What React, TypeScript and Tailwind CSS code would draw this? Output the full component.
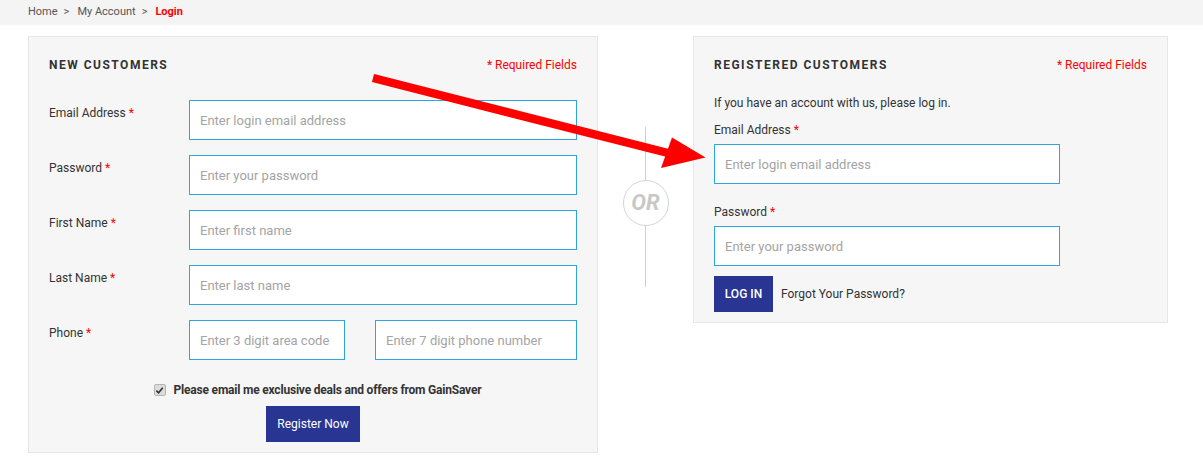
import React from "react";

const font = { fontFamily: "Roboto, 'Liberation Sans', sans-serif" };

const Req = () => <span className="text-[#ff0000] ml-[3px]">*</span>;

const Field = ({ placeholder, className }: { placeholder: string; className: string }) => (
  <input
    placeholder={placeholder}
    className={`h-[40px] bg-white border border-[#2ba6de] px-[10px] text-[13px] text-[#333] placeholder:text-[#a4a4a4] outline-none ${className}`}
  />
);

const FormRow = ({ label, children }: { label: string; children: React.ReactNode }) => (
  <div className="flex">
    <div className="w-[140px] pt-[5px] text-[12px] leading-[16px] text-[#333]">
      {label}
      <Req />
    </div>
    {children}
  </div>
);

const PanelHead = ({ title }: { title: string }) => (
  <div className="flex justify-between items-center leading-[16px]">
    <h2 className="text-[12px] font-bold tracking-[1.5px] text-[#333]">{title}</h2>
    <span className="text-[12px] text-[#ff0000]">* Required Fields</span>
  </div>
);

const NewCustomers = () => (
  <div className="w-[570px] bg-[#f6f6f6] border border-[#e6e6e6] pl-[20px] pr-[20px] pt-[20px] pb-[10px]">
    <PanelHead title="NEW CUSTOMERS" />
    <div className="mt-[27px] flex flex-col gap-[15px]">
      <FormRow label="Email Address">
        <Field placeholder="Enter login email address" className="w-[388px]" />
      </FormRow>
      <FormRow label="Password">
        <Field placeholder="Enter your password" className="w-[388px]" />
      </FormRow>
      <FormRow label="First Name">
        <Field placeholder="Enter first name" className="w-[388px]" />
      </FormRow>
      <FormRow label="Last Name">
        <Field placeholder="Enter last name" className="w-[388px]" />
      </FormRow>
      <FormRow label="Phone">
        <Field placeholder="Enter 3 digit area code" className="w-[156px]" />
        <Field placeholder="Enter 7 digit phone number" className="w-[202px] ml-[30px]" />
      </FormRow>
    </div>
    {/* opt-in row sits a little right of centre in the original */}
    <div className="mt-[22px] pl-[9px] flex items-center justify-center gap-[8px] leading-[16px]">
      <span className="w-[12px] h-[12px] rounded-[2px] bg-[#dcdcdc] border border-[#b5b5b5] flex items-center justify-center">
        <svg width="9" height="9" viewBox="0 0 10 10">
          <path d="M1.5 5.2 L4 7.6 L8.6 2" fill="none" stroke="#333" strokeWidth="1.8" />
        </svg>
      </span>
      <span className="text-[12px] font-bold tracking-[-0.2px] text-[#333]">
        Please email me exclusive deals and offers from GainSaver
      </span>
    </div>
    <div className="mt-[8px] flex justify-center">
      <button className="h-[36px] px-[11px] bg-[#283593] text-white text-[12px]">Register Now</button>
    </div>
  </div>
);

const OrDivider = () => (
  <div className="w-[95px] flex flex-col items-center pt-[91px]">
    <div className="w-px h-[53px] bg-[#cfcfcf]" />
    <div className="w-[46px] h-[46px] rounded-full border border-[#d4d4d4] flex items-center justify-center">
      <span className="text-[22px] font-bold italic text-[#c8c8c8] leading-none">OR</span>
    </div>
    <div className="w-px h-[61px] bg-[#cfcfcf]" />
  </div>
);

const RegisteredCustomers = () => (
  <div className="w-[475px] self-start bg-[#f6f6f6] border border-[#e6e6e6] pl-[20px] pr-[20px] pt-[20px] pb-[10px]">
    <PanelHead title="REGISTERED CUSTOMERS" />
    <p className="mt-[22px] text-[12px] leading-[16px] text-[#333]">If you have an account with us, please log in.</p>
    <div className="mt-[11px] text-[12px] leading-[16px] text-[#333]">
      Email Address
      <Req />
    </div>
    <Field placeholder="Enter login email address" className="w-[346px] mt-[6px] block" />
    <div className="mt-[20px] text-[12px] leading-[16px] text-[#333]">
      Password
      <Req />
    </div>
    <Field placeholder="Enter your password" className="w-[346px] mt-[6px] block" />
    <div className="mt-[10px] flex items-center gap-[8px]">
      <button className="h-[36px] w-[59px] bg-[#283593] text-white text-[12px] font-medium">LOG IN</button>
      <span className="text-[12px] text-[#333]">Forgot Your Password?</span>
    </div>
  </div>
);

export default function App() {
  return (
    <div className="relative w-[1203px] h-[462px] bg-white overflow-hidden" style={font}>
      <div className="h-[25px] bg-[#f4f4f4] flex items-center pl-[28px] text-[11px] text-[#555]">
        <span>Home</span>
        <span className="mx-[6px]">&gt;</span>
        <span className="ml-[2px]">My Account</span>
        <span className="mx-[6px]">&gt;</span>
        <span className="ml-[2px] font-bold text-[#ff0000]">Login</span>
      </div>
      <div className="flex pl-[28px] mt-[11px]">
        <NewCustomers />
        <OrDivider />
        <RegisteredCustomers />
      </div>
      {/* red annotation arrow drawn over the page */}
      <svg className="absolute left-0 top-0 pointer-events-none" width="1203" height="462">
        <line x1="373" y1="78" x2="668" y2="153" stroke="#ff0000" strokeWidth="8.5" />
        <polygon points="661,168 672,137.5 705.5,157.5" fill="#ff0000" />
      </svg>
    </div>
  );
}
